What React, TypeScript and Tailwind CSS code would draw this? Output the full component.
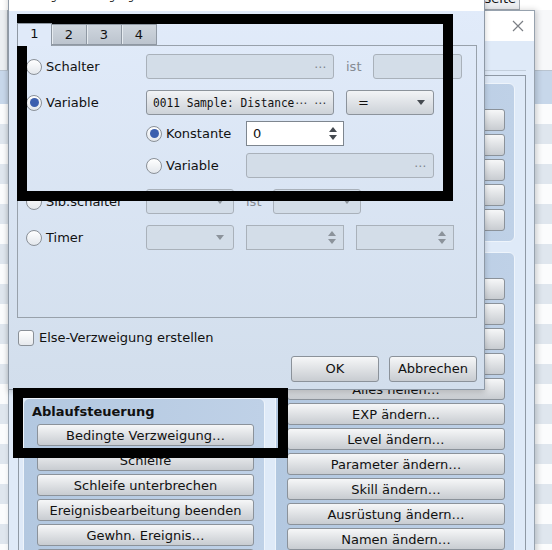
import React from "react";

const sans = "font-['DejaVu_Sans','Noto_Sans',sans-serif]";
const mono = "font-['DejaVu_Sans_Mono','Liberation_Mono',monospace]";

function Radio({ checked = false }: { checked?: boolean }) {
  return (
    <span className="flex h-4 w-4 shrink-0 items-center justify-center rounded-full border border-[#8a9097] bg-gradient-to-b from-white to-[#e3e7ec]">
      {checked && <span className="h-[9px] w-[9px] rounded-full bg-[#3c5fae]" />}
    </span>
  );
}

function DownArrow({ dim = false }: { dim?: boolean }) {
  return (
    <svg width="8" height="5" viewBox="0 0 8 5" className="shrink-0">
      <path d="M0 0 H8 L4 5 Z" fill={dim ? "#8c939b" : "#454a50"} />
    </svg>
  );
}

function UpArrow({ dim = false }: { dim?: boolean }) {
  return (
    <svg width="8" height="5" viewBox="0 0 8 5" className="shrink-0">
      <path d="M0 5 H8 L4 0 Z" fill={dim ? "#8c939b" : "#454a50"} />
    </svg>
  );
}

// midline ellipsis used as the browse marker
function Dots({ dim = false }: { dim?: boolean }) {
  return (
    <span className={`text-[12px] leading-none ${dim ? "text-[#7d848c]" : "text-[#30353a]"}`}>⋯</span>
  );
}

function Spinner({ dim = false }: { dim?: boolean }) {
  return (
    <span className="flex flex-col items-center gap-[3px]">
      <UpArrow dim={dim} />
      <DownArrow dim={dim} />
    </span>
  );
}

function DimPicker({ w }: { w: string }) {
  return (
    <div className={`${w} flex h-[25px] shrink-0 items-center justify-end rounded-[3px] border border-[#a9b1ba] bg-[#d3dde8] pr-[7px]`}>
      <Dots dim />
    </div>
  );
}

function DimCombo({ w }: { w: string }) {
  return (
    <div className={`${w} flex h-[25px] shrink-0 items-center justify-end rounded-[3px] border border-[#a9b1ba] bg-[#d3dde8] pr-[9px]`}>
      <DownArrow dim />
    </div>
  );
}

function DimSpin({ w }: { w: string }) {
  return (
    <div className={`${w} flex h-[25px] shrink-0 items-center justify-end border border-[#a9b1ba] bg-[#d3dde8] pr-[7px]`}>
      <Spinner dim />
    </div>
  );
}

function PushButton({ label }: { label: string }) {
  return (
    <div className="flex h-[22px] w-full shrink-0 items-center justify-center rounded-[3px] border border-[#8b929a] bg-gradient-to-b from-[#f6f7f8] to-[#c8ccd1] text-[13px] leading-none text-[#111]">
      {label}
    </div>
  );
}

function Panel({ title, buttons, className }: { title?: string; buttons: string[]; className: string }) {
  return (
    <div className={`${className} shrink-0 rounded-[6px] border border-[#eef4fb] bg-gradient-to-r from-[#b3c8e0] to-[#bfd1e7]`}>
      <div className="-ml-[5px] h-[25px] pt-[5px] text-[13px] font-bold leading-[16px] text-[#111]">{title}</div>
      <div className="flex flex-col gap-[3px]">
        {buttons.map((b, i) => (
          <PushButton key={i} label={b} />
        ))}
      </div>
    </div>
  );
}

function BackList() {
  const rows = Array.from({ length: 12 });
  return (
    <div className="absolute inset-0 flex flex-col bg-[#f3f5f8]">
      <div className="relative h-[10px] shrink-0 bg-white">
        <div className="absolute left-[440px] top-[-12px] flex h-[22px] w-[80px] items-end justify-end border border-[#a5acb4] bg-[#eceef1] pr-[3px] text-[13px] leading-[20px]">
          seite
        </div>
      </div>
      <div className="flex h-[60px] shrink-0">
        <div className="w-[7px] bg-[#eceff2]" />
        <div className="w-px bg-[#aab2bb]" />
        <div className="flex-1 bg-[#f7f8fa]" />
      </div>
      <div className="h-px shrink-0 bg-[#b9c4d0]" />
      <div className="h-[33px] shrink-0 bg-[#c7d7ea]" />
      {rows.map((_, i) => (
        <div key={i} className="flex h-[40px] shrink-0 flex-col">
          <div className="h-[20px] bg-[#fbfcfd]" />
          <div className="h-[20px] bg-[#dfe6ee]" />
        </div>
      ))}
    </div>
  );
}

function CommandWindow() {
  const right1 = ["", "", "", "", ""];
  const right2 = [
    "",
    "",
    "",
    "",
    "Alles heilen…",
    "EXP ändern…",
    "Level ändern…",
    "Parameter ändern…",
    "Skill ändern…",
    "Ausrüstung ändern…",
    "Namen ändern…",
  ];
  const left2 = [
    "Bedingte Verzweigung…",
    "Schleife",
    "Schleife unterbrechen",
    "Ereignisbearbeitung beenden",
    "Gewhn. Ereignis…",
    "",
  ];
  return (
    <div className="absolute left-[8px] top-[10px] flex h-[620px] w-[527px] flex-col border border-[#97a2ae] shadow-[2px_0_6px_rgba(0,0,0,0.18)]">
      <div className="flex h-[30px] shrink-0 items-center justify-end bg-white pr-[10px]">
        <svg width="12" height="12" viewBox="0 0 12 12">
          <path d="M1 1 L11 11 M11 1 L1 11" stroke="#7b7f85" strokeWidth="1.2" />
        </svg>
      </div>
      <div className="flex flex-1 flex-col bg-[#dfeaf8] pl-[9px] pr-[8px] pt-[29px]">
        <div className="flex flex-1 flex-col border-t border-[#c3cedb] pt-[4px]">
          <div className="flex flex-1 gap-[10px] border-l border-r border-t border-[#8f99a5] pl-[4px] pr-[9px] pt-[7px]">
            <div className="flex w-[242px] shrink-0 flex-col gap-[10px]">
              <Panel className="h-[305px] px-[13px]" buttons={[]} />
              <Panel className="pl-[13px] pr-[10px] pb-[10px]" title="Ablaufsteuerung" buttons={left2} />
            </div>
            <div className="flex w-[240px] shrink-0 flex-col gap-[10px]">
              <Panel className="h-[159px] pl-[11px] pr-[9px]" buttons={right1} />
              <Panel className="pl-[11px] pr-[9px] pb-[10px]" buttons={right2} />
            </div>
          </div>
        </div>
      </div>
    </div>
  );
}

function Row({ children, className = "" }: { children: React.ReactNode; className?: string }) {
  return <div className={`flex h-[25px] shrink-0 items-center ${className}`}>{children}</div>;
}

function BranchDialog() {
  return (
    <div className="absolute left-[8px] top-[-30px] flex h-[420px] w-[477px] flex-col border border-[#8e99a6] shadow-[0_2px_6px_rgba(0,0,0,0.2)]">
      <div className="flex h-[40px] shrink-0 items-end bg-white pb-[9px] pl-[13px]">
        <span className="text-[10px] leading-none text-[#222]">Bedingte Verzweigung</span>
      </div>
      <div className="flex flex-1 flex-col bg-gradient-to-b from-[#e1ebfa] to-[#d2deec] pl-[8px] pr-[7px] pt-[12px]">
        {/* tab strip */}
        <div className="relative z-10 flex h-[22px] shrink-0 items-end">
          <div className="flex h-[23px] w-[35px] translate-y-[1px] items-center justify-center border-l border-r border-t border-[#8f98a3] bg-[#e0eaf9] pb-[3px] text-[13px]">
            1
          </div>
          {["2", "3", "4"].map((t) => (
            <div
              key={t}
              className="flex h-[21px] w-[35px] items-center justify-center border border-l-0 border-[#8f98a3] bg-gradient-to-b from-[#cfd6de] to-[#bcc4ce] text-[13px] shadow-[inset_1px_0_0_#e6ebf0]"
            >
              {t}
            </div>
          ))}
        </div>
        {/* tab page */}
        <div className="flex h-[273px] shrink-0 flex-col border border-[#98a1ab] pl-[8px]">
          <Row className="mt-[8px]">
            <label className="flex w-[120px] items-center gap-[4px]">
              <Radio />
              <span>Schalter</span>
            </label>
            <DimPicker w="w-[188px]" />
            <span className="ml-[12px] w-[27px] text-[#858b93]">ist</span>
            <DimCombo w="w-[89px]" />
          </Row>
          <Row className="mt-[11px]">
            <label className="flex w-[120px] items-center gap-[4px]">
              <Radio checked />
              <span>Variable</span>
            </label>
            <div className="flex h-[25px] w-[188px] shrink-0 items-center rounded-[3px] border border-[#8c939b] bg-gradient-to-b from-[#f2f4f6] to-[#cdd2d8] pl-[6px] pr-[7px]">
              <span className="w-[142px] shrink-0 whitespace-nowrap">
                <span className={`${mono} inline-block origin-left scale-x-[0.86] text-[13px] leading-none text-[#111]`}>
                  0011 Sample: Distance
                </span>
              </span>
              <span className="text-[12px] leading-none text-[#30353a]">⋯</span>
              <span className="flex-1" />
              <Dots />
            </div>
            <div className="ml-[12px] flex h-[25px] w-[88px] shrink-0 items-center justify-between rounded-[3px] border border-[#8c939b] bg-gradient-to-b from-[#f2f4f6] to-[#cdd2d8] pl-[11px] pr-[8px]">
              <span className="text-[13px] leading-none">=</span>
              <DownArrow />
            </div>
          </Row>
          <Row className="mt-[6px] pl-[120px]">
            <label className="flex w-[100px] items-center gap-[4px]">
              <Radio checked />
              <span>Konstante</span>
            </label>
            <div className="flex h-[25px] w-[98px] shrink-0 items-center justify-between border border-[#7e868f] bg-white pl-[6px] pr-[6px]">
              <span className="text-[13px] leading-none">0</span>
              <Spinner />
            </div>
          </Row>
          <Row className="mt-[7px] pl-[120px]">
            <label className="flex w-[100px] items-center gap-[4px]">
              <Radio />
              <span>Variable</span>
            </label>
            <DimPicker w="w-[188px]" />
          </Row>
          <Row className="mt-[11px]">
            <label className="flex w-[120px] items-center gap-[4px]">
              <Radio />
              <span>Slb.schalter</span>
            </label>
            <DimCombo w="w-[88px]" />
            <span className="ml-[12px] w-[27px] text-[#858b93]">ist</span>
            <DimCombo w="w-[88px]" />
          </Row>
          <Row className="mt-[11px]">
            <label className="flex w-[120px] items-center gap-[4px]">
              <Radio />
              <span>Timer</span>
            </label>
            <DimCombo w="w-[88px]" />
            <div className="ml-[12px]">
              <DimSpin w="w-[98px]" />
            </div>
            <div className="ml-[12px]">
              <DimSpin w="w-[98px]" />
            </div>
          </Row>
        </div>
        <label className="ml-[1px] mt-[12px] flex h-[16px] shrink-0 items-center gap-[5px]">
          <span className="h-4 w-4 rounded-[3px] border border-[#8a9097] bg-gradient-to-b from-white to-[#e6e9ed]" />
          <span>Else-Verzweigung erstellen</span>
        </label>
        <div className="mt-[10px] flex shrink-0 justify-end gap-[10px]">
          <div className="flex h-[26px] w-[88px] items-center justify-center rounded-[3px] border border-[#8b929a] bg-gradient-to-b from-[#f6f7f8] to-[#c8ccd1]">
            OK
          </div>
          <div className="flex h-[26px] w-[88px] items-center justify-center rounded-[3px] border border-[#8b929a] bg-gradient-to-b from-[#f6f7f8] to-[#c8ccd1]">
            Abbrechen
          </div>
        </div>
      </div>
    </div>
  );
}

export default function App() {
  return (
    <div className={`relative h-[550px] w-[552px] overflow-hidden bg-white ${sans} text-[13px] text-[#111]`}>
      <BackList />
      <CommandWindow />
      <BranchDialog />
      {/* highlight frames */}
      <div className="absolute left-[17px] top-[14px] h-[187px] w-[436px] border-[10px] border-black" />
      <div className="absolute left-[13px] top-[388px] h-[70px] w-[275px] border-[10px] border-black" />
    </div>
  );
}
